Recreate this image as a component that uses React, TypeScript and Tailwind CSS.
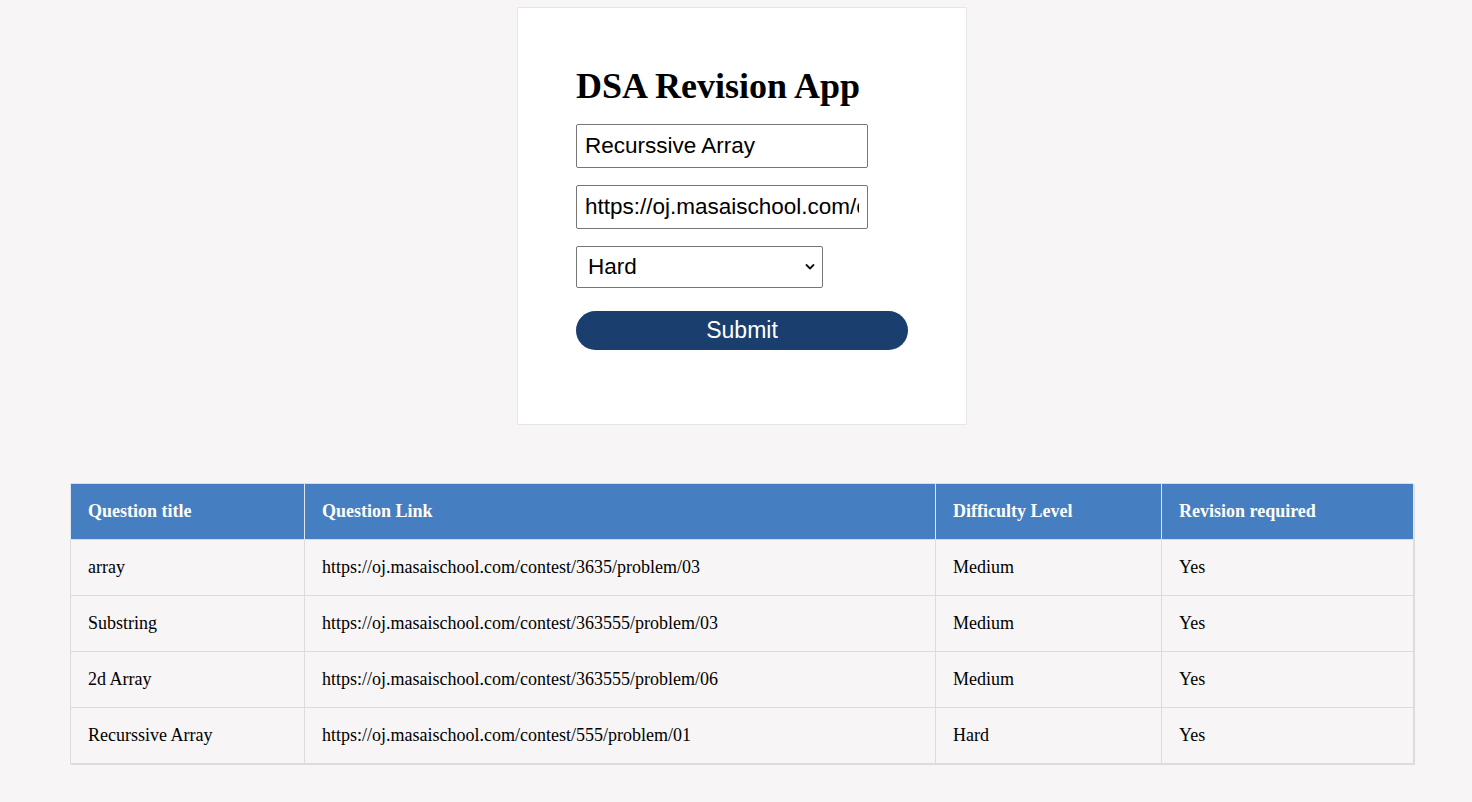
import React from "react";

const rows = [
  ["array", "https://oj.masaischool.com/contest/3635/problem/03", "Medium", "Yes"],
  ["Substring", "https://oj.masaischool.com/contest/363555/problem/03", "Medium", "Yes"],
  ["2d Array", "https://oj.masaischool.com/contest/363555/problem/06", "Medium", "Yes"],
  ["Recurssive Array", "https://oj.masaischool.com/contest/555/problem/01", "Hard", "Yes"],
];

export default function App() {
  return (
    <div className="min-h-[802px] w-full bg-[#f7f5f6] pt-[7px] pb-[38px] font-['Liberation_Serif',serif] text-black">
      <div className="ml-[517px] w-[450px] border border-[#e6e6e6] bg-white pt-[58px] pb-[74px] pl-[58px]">
        <h1 className="text-[36px] font-bold leading-[40px] font-['Liberation_Serif',serif]">DSA Revision App</h1>
        <form className="mt-[18px] flex flex-col font-['Liberation_Sans',Arial,sans-serif]" onSubmit={(e) => e.preventDefault()}>
          <input
            className="h-[44px] w-[292px] rounded-[2px] border border-[#767676] px-[8px] text-[22.5px] text-black outline-none"
            defaultValue="Recurssive Array"
          />
          <input
            className="mt-[17px] h-[44px] w-[292px] rounded-[2px] border border-[#767676] px-[8px] text-[22.5px] text-black outline-none"
            defaultValue="https://oj.masaischool.com/contest/555/problem/01"
          />
          <div className="relative mt-[17px] h-[42px] w-[247px]">
            <select
              className="h-[42px] w-[247px] appearance-none rounded-[2px] border border-[#767676] bg-white pl-[11px] text-[22.5px] text-black outline-none"
              defaultValue="Hard"
            >
              <option>Easy</option>
              <option>Medium</option>
              <option>Hard</option>
            </select>
            <svg className="pointer-events-none absolute right-[8px] top-[17px]" width="10" height="8" viewBox="0 0 10 8">
              <path d="M1.5 2 L5 5.5 L8.5 2" fill="none" stroke="#111" strokeWidth="1.8" strokeLinecap="round" strokeLinejoin="round" />
            </svg>
          </div>
          <button
            type="submit"
            className="mt-[23px] h-[39px] w-[332px] rounded-[20px] bg-[#1a3f6e] text-[23px] text-white"
          >
            Submit
          </button>
        </form>
      </div>

      <table className="ml-[70px] mt-[58px] w-[1343px] table-fixed border-collapse border border-[#dcdcdc] text-[18px] shadow-[1px_1px_0_#dcdcdc]">
        <colgroup>
          <col className="w-[234px]" />
          <col className="w-[631px]" />
          <col className="w-[226px]" />
          <col className="w-[252px]" />
        </colgroup>
        <thead>
          <tr className="bg-[#457ec1] text-white">
            {["Question title", "Question Link", "Difficulty Level", "Revision required"].map((h) => (
              <th key={h} className="border-x border-[#dfe6ee] py-[18px] pl-[17px] text-left font-bold leading-[19px]">
                {h}
              </th>
            ))}
          </tr>
        </thead>
        <tbody>
          {rows.map((r, i) => (
            <tr key={i}>
              {r.map((c, j) => (
                <td key={j} className="border border-[#dcdcdc] py-[18px] pl-[17px] leading-[19px]">
                  {c}
                </td>
              ))}
            </tr>
          ))}
        </tbody>
      </table>
    </div>
  );
}
